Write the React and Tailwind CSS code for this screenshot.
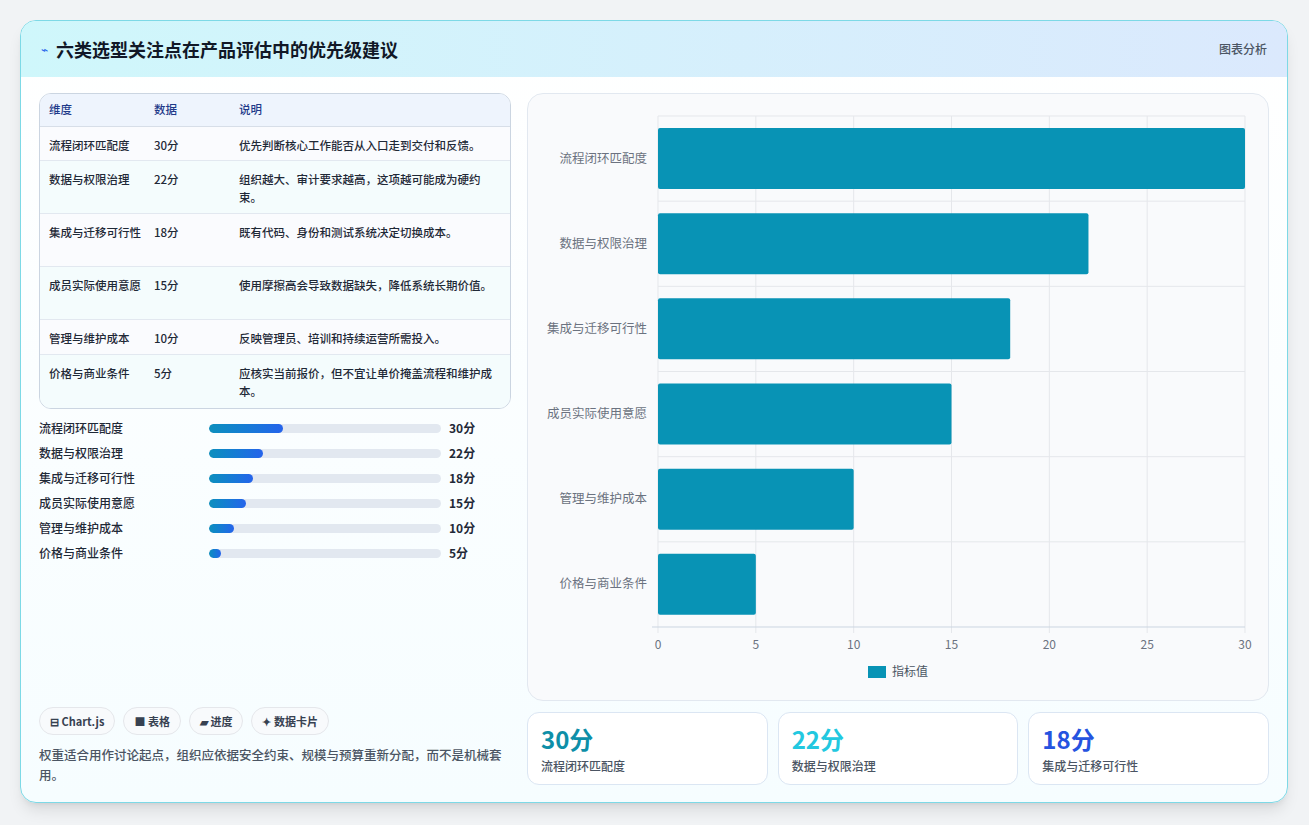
const rows = [
  ["流程闭环匹配度", "30分", "优先判断核心工作能否从入口走到交付和反馈。", 30],
  ["数据与权限治理", "22分", "组织越大、审计要求越高，这项越可能成为硬约束。", 22],
  ["集成与迁移可行性", "18分", "既有代码、身份和测试系统决定切换成本。", 18],
  ["成员实际使用意愿", "15分", "使用摩擦高会导致数据缺失，降低系统长期价值。", 15],
  ["管理与维护成本", "10分", "反映管理员、培训和持续运营所需投入。", 10],
  ["价格与商业条件", "5分", "应核实当前报价，但不宜让单价掩盖流程和维护成本。", 5],
];
const rowH = ["h-[34px]", "h-[53px]", "h-[53px]", "h-[53px]", "h-[35px]", "h-[53px]"];

function Chart() {
  const x0 = 130, x1 = 717, y0 = 22, y1 = 533;
  const band = (y1 - y0) / 6;
  const sx = (v) => x0 + ((x1 - x0) * v) / 30;
  return (
    <svg width="740" height="607" className="block" style={{ fontFamily: "'Noto Sans CJK SC', sans-serif" }}>
      {[0, 1, 2, 3, 4, 5, 6].map((i) => (
        <line key={"v" + i} x1={sx(i * 5)} x2={sx(i * 5)} y1={y0} y2={y1 + 6} stroke="#e5e7eb" />
      ))}
      {[0, 1, 2, 3, 4, 5].map((i) => (
        <line key={"h" + i} x1={x0} x2={x1} y1={y0 + band * i} y2={y0 + band * i} stroke="#e5e7eb" />
      ))}
      <line x1={x0 - 6} x2={x1} y1={y1} y2={y1} stroke="#cbd5e1" />
      {rows.map((r, i) => (
        <g key={i}>
          <rect x={x0} y={y0 + band * i + 12} width={sx(r[3]) - x0} height={61} rx="2" fill="#0893b5" />
          <text x={x0 - 11} y={y0 + band * i + band / 2 + 4} textAnchor="end" fontSize="12.5" fill="#6b7280">{r[0]}</text>
        </g>
      ))}
      {[0, 5, 10, 15, 20, 25, 30].map((v) => (
        <text key={v} x={sx(v)} y={555} textAnchor="middle" fontSize="12" fill="#6b7280">{v}</text>
      ))}
      <rect x="340" y="572" width="18" height="12" fill="#0893b5" />
      <text x="364" y="582" fontSize="12" fill="#4b5563">指标值</text>
    </svg>
  );
}

export default function App() {
  return (
    <div className="min-h-[825px] w-[1309px] bg-[#f1f3f5] pt-5 pl-5" style={{}}>
      <div className="w-[1268px] h-[783px] rounded-2xl border border-[#7dd9e6] bg-gradient-to-b from-white to-[#f6fdff] overflow-hidden flex flex-col shadow-lg" style={{ fontFamily: "'Noto Sans CJK SC', 'Noto Sans', sans-serif" }}>
        <div className="h-[56px] shrink-0 flex items-center justify-between px-5 bg-gradient-to-r from-[#cff7fb] to-[#dbe9fd]">
          <div className="flex items-center gap-2">
            <span className="text-[#2563eb] text-xs">⌁</span>
            <span className="text-[18px] font-bold text-[#111827]">六类选型关注点在产品评估中的优先级建议</span>
          </div>
          <span className="text-[12px] text-[#4b5563] font-medium">图表分析</span>
        </div>
        <div className="flex-1 flex gap-4 px-[18px] pt-4 pb-[18px]">
          <div className="w-[475px] flex flex-col">
            <div className="rounded-xl border border-[#cbd5e1] overflow-hidden text-[11.5px]">
              <div className="flex h-[33px] items-center bg-[#eef4fd] text-[#1e3a8a] font-medium border-b border-[#d7dee8]">
                <div className="w-[114px] pl-[9px]">维度</div>
                <div className="w-[85px]">数据</div>
                <div className="flex-1">说明</div>
              </div>
              {rows.map((r, i) => (
                <div key={i} className={`flex ${rowH[i]} pt-[9px] text-[#1f2937] font-medium ${i % 2 ? "bg-[#f4fcfd]" : "bg-[#fafbfe]"} ${i < 5 ? "border-b border-[#e2e8f0]" : ""}`}>
                  <div className="w-[114px] pl-[9px] pr-2 leading-[18px]">{r[0]}</div>
                  <div className="w-[85px] leading-[18px]">{r[1]}</div>
                  <div className="flex-1 pr-3 leading-[18px]">{r[2]}</div>
                </div>
              ))}
            </div>
            <div className="mt-[10px] flex flex-col gap-[7px]">
              {rows.map((r, i) => (
                <div key={i} className="flex items-center h-[18px] text-[12px] font-medium text-[#1f2937]">
                  <div className="w-[170px]">{r[0]}</div>
                  <div className="w-[232px] h-[9px] rounded-full bg-[#e2e8f0] overflow-hidden">
                    <div className="h-full rounded-full bg-gradient-to-r from-[#0e8fbd] to-[#2563eb]" style={{ width: `${Math.max(r[3] * 1.06, 4)}%`.replace(/[\d.]+%/, (m) => `${Math.max(parseFloat(m), 4.3)}%`) }} />
                  </div>
                  <div className="ml-2 font-bold">{r[1]}</div>
                </div>
              ))}
            </div>
            <div className="flex-1" />
            <div className="flex gap-2 text-[11px] font-semibold text-[#374151]">
              <span className="h-[28px] px-[10px] flex items-center rounded-full border border-[#e5e7eb] bg-[#f8fafc]">⊟ Chart.js</span>
              <span className="h-[28px] px-[10px] flex items-center rounded-full border border-[#e5e7eb] bg-[#f8fafc]">■ 表格</span>
              <span className="h-[28px] px-[10px] flex items-center rounded-full border border-[#e5e7eb] bg-[#f8fafc]">▰ 进度</span>
              <span className="h-[28px] px-[10px] flex items-center rounded-full border border-[#e5e7eb] bg-[#f8fafc]">✦ 数据卡片</span>
            </div>
            <p className="mt-[10px] text-[12.5px] leading-[20px] text-[#4b5563] font-medium">权重适合用作讨论起点，组织应依据安全约束、规模与预算重新分配，而不是机械套用。</p>
          </div>
          <div className="flex-1 flex flex-col gap-[11px]">
            <div className="h-[608px] rounded-2xl border border-[#e2e8f0] bg-[#f9fafc] overflow-hidden">
              <Chart />
            </div>
            <div className="flex gap-[10px]">
              {[["30分", "流程闭环匹配度", "text-[#0e8fa8]"], ["22分", "数据与权限治理", "text-[#22c8e0]"], ["18分", "集成与迁移可行性", "text-[#2553e0]"]].map((c, i) => (
                <div key={i} className="flex-1 h-[73px] rounded-xl border border-[#dbe6f3] bg-white px-[13px] pt-[10px]">
                  <div className={`text-[24px] font-bold leading-[32px] ${c[2]}`}>{c[0]}</div>
                  <div className="text-[12px] text-[#4b5563] font-medium mt-[2px]">{c[1]}</div>
                </div>
              ))}
            </div>
          </div>
        </div>
      </div>
    </div>
  );
}
